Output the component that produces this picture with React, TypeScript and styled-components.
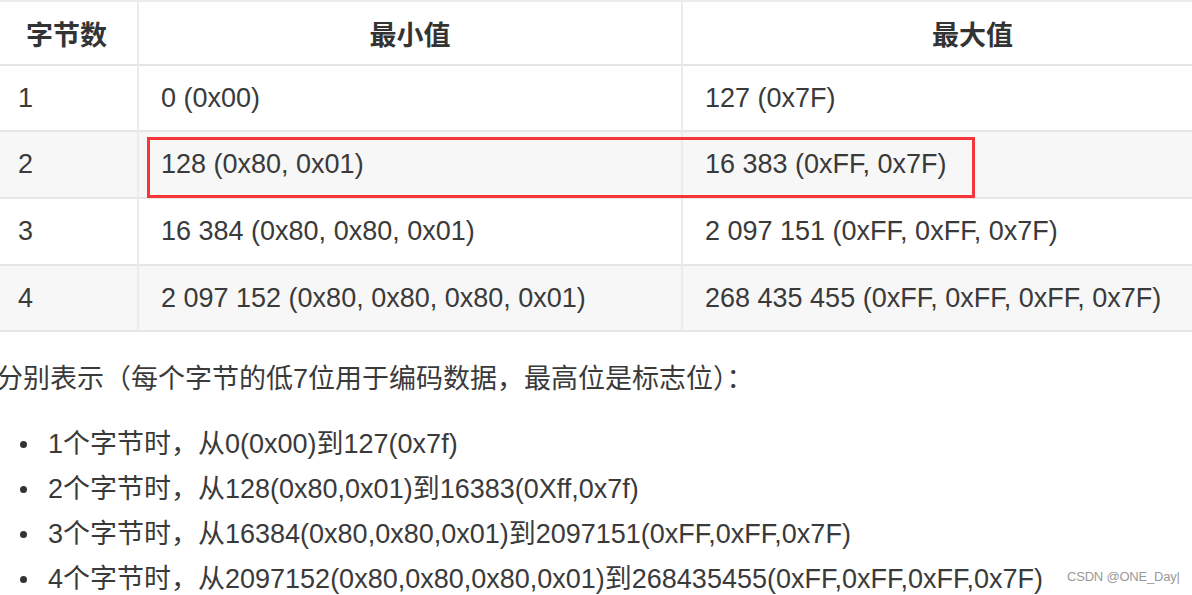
import React from "react";
import styled, { createGlobalStyle } from "styled-components";

const GlobalStyle = createGlobalStyle`
  html, body {
    margin: 0;
    padding: 0;
    background: #ffffff;
    overflow: hidden;
  }
  body {
    font-family: "Liberation Sans", Arial, "Noto Sans CJK SC", sans-serif;
    color: #333333;
  }
`;

const Page = styled.div`
  position: relative;
  margin-left: -4px;
  width: 1196px;
  height: 599px;
  overflow: hidden;
`;

const TableWrap = styled.div`
  position: relative;
  width: 1196px;
  overflow: hidden;
`;

const Table = styled.table`
  border-collapse: separate;
  border-spacing: 0;
  table-layout: fixed;
  width: 1268px;
  border-top: 2px solid #ececec;
  font-size: 27px;
`;

const HeadCell = styled.th`
  height: 64px;
  padding: 0;
  font-weight: bold;
  text-align: center;
  color: #333333;
  border-bottom: 2px solid #e6e6e6;
  border-right: 2px solid #ececec;
  box-sizing: border-box;
`;

const Row = styled.tr<{ $striped?: boolean }>`
  background: ${(p) => (p.$striped ? "#f7f7f7" : "#ffffff")};
`;

const Cell = styled.td<{ $h: number }>`
  height: ${(p) => p.$h}px;
  padding: 0 0 0 22px;
  box-sizing: border-box;
  text-align: left;
  color: #3a3a3a;
  border-bottom: 2px solid #e6e6e6;
  border-right: 2px solid #ececec;
  white-space: nowrap;
`;

const Highlight = styled.div`
  position: absolute;
  left: 151px;
  top: 137px;
  width: 828px;
  height: 61px;
  box-sizing: border-box;
  border: 3px solid #f4363b;
  pointer-events: none;
`;

const Para = styled.p`
  margin: 25px 0 0;
  font-size: 27px;
  line-height: 45px;
  color: #3a3a3a;
  white-space: nowrap;
`;

const List = styled.ul`
  list-style: none;
  margin: 20px 0 0;
  padding: 0 0 0 52px;
  font-size: 27px;
  line-height: 45px;
  color: #3a3a3a;
`;

const Item = styled.li`
  position: relative;
  white-space: nowrap;
  &::before {
    content: "";
    position: absolute;
    left: -28px;
    top: 19px;
    width: 7px;
    height: 7px;
    border-radius: 50%;
    background: #333333;
  }
`;

const Watermark = styled.div`
  position: absolute;
  left: 1071px;
  top: 569px;
  font-size: 13px;
  color: #999999;
  font-family: "Liberation Sans", Arial, sans-serif;
  letter-spacing: -0.2px;
`;

const rows = [
  ["1", "0 (0x00)", "127 (0x7F)"],
  ["2", "128 (0x80, 0x01)", "16 383 (0xFF, 0x7F)"],
  ["3", "16 384 (0x80, 0x80, 0x01)", "2 097 151 (0xFF, 0xFF, 0x7F)"],
  ["4", "2 097 152 (0x80, 0x80, 0x80, 0x01)", "268 435 455 (0xFF, 0xFF, 0xFF, 0x7F)"],
];

const heights = [66, 67, 67, 66];

const items = [
  "1个字节时，从0(0x00)到127(0x7f)",
  "2个字节时，从128(0x80,0x01)到16383(0Xff,0x7f)",
  "3个字节时，从16384(0x80,0x80,0x01)到2097151(0xFF,0xFF,0x7F)",
  "4个字节时，从2097152(0x80,0x80,0x80,0x01)到268435455(0xFF,0xFF,0xFF,0x7F)",
];

export default function App() {
  return (
    <>
      <GlobalStyle />
      <Page>
        <TableWrap>
          <Table>
            <colgroup>
              <col style={{ width: 143 }} />
              <col style={{ width: 544 }} />
              <col style={{ width: 581 }} />
            </colgroup>
            <thead>
              <tr>
                <HeadCell>字节数</HeadCell>
                <HeadCell>最小值</HeadCell>
                <HeadCell>最大值</HeadCell>
              </tr>
            </thead>
            <tbody>
              {rows.map((r, i) => (
                <Row key={r[0]} $striped={i % 2 === 1}>
                  {r.map((c, j) => (
                    <Cell key={j} $h={heights[i]}>
                      {c}
                    </Cell>
                  ))}
                </Row>
              ))}
            </tbody>
          </Table>
          <Highlight />
        </TableWrap>
        <Para>分别表示（每个字节的低7位用于编码数据，最高位是标志位）：</Para>
        <List>
          {items.map((t) => (
            <Item key={t}>{t}</Item>
          ))}
        </List>
        <Watermark>CSDN @ONE_Day|</Watermark>
      </Page>
    </>
  );
}
